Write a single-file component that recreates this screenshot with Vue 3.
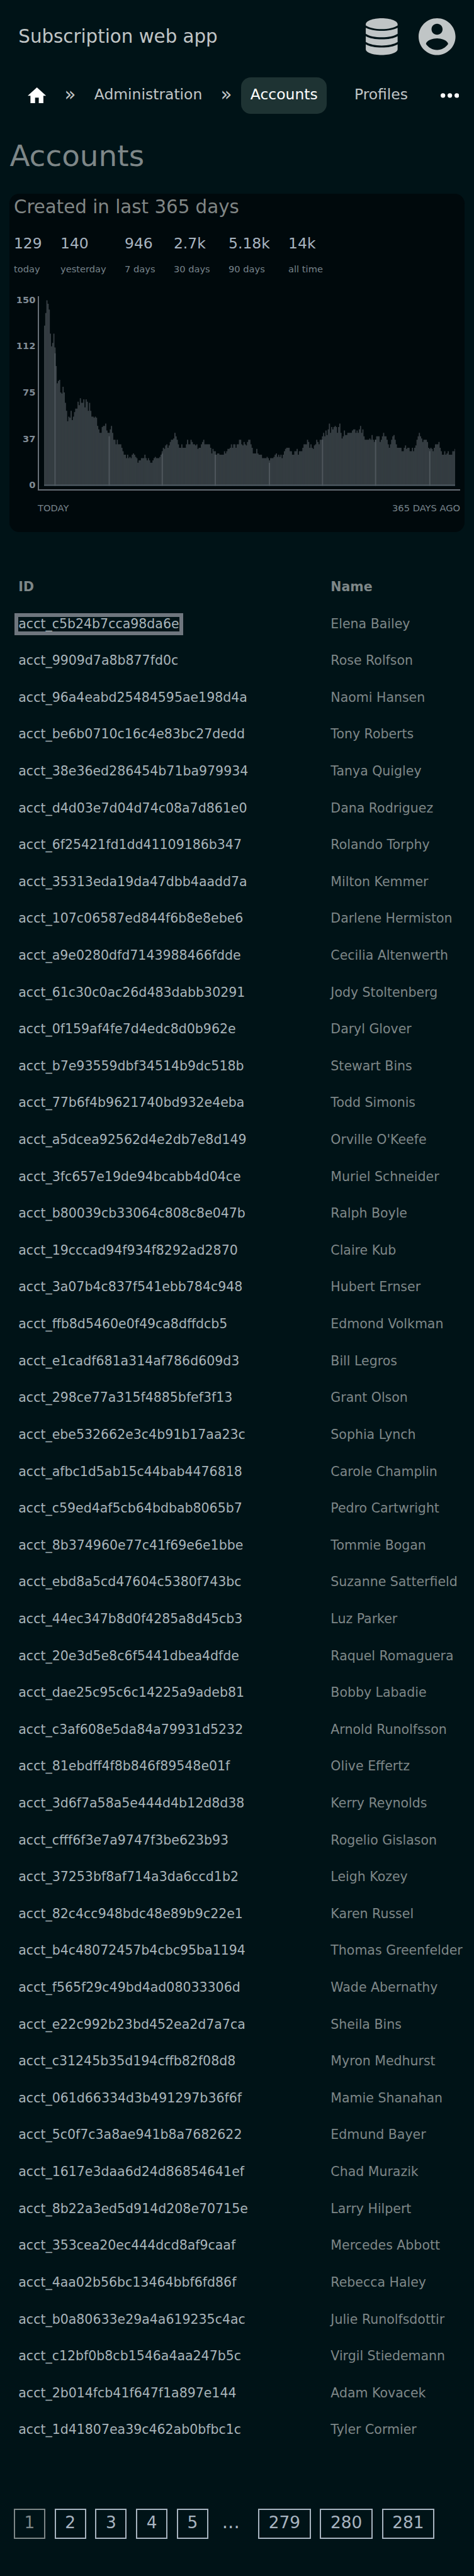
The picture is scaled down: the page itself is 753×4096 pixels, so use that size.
<script setup>
const stats = [
  ['129', 'today'],
  ['140', 'yesterday'],
  ['946', '7 days'],
  ['2.7k', '30 days'],
  ['5.18k', '90 days'],
  ['14k', 'all time'],
]

const ticks = ['150', '112', '75', '37', '0']

// Bar heights, newest day first.
const bars = [
  139, 150, 161, 158, 153, 132, 121, 124, 132, 120, 104, 89, 91, 92, 81, 80, 86, 81, 72, 65,
  56, 60, 59, 65, 57, 60, 64, 67, 67, 73, 70, 76, 72, 72, 75, 68, 75, 73, 65, 72,
  65, 60, 60, 59, 60, 59, 52, 49, 46, 46, 51, 52, 52, 54, 48, 46, 46, 49, 52, 46,
  40, 40, 36, 40, 36, 36, 36, 33, 30, 27, 27, 24, 27, 24, 25, 24, 27, 28, 27, 25,
  24, 20, 22, 22, 24, 24, 24, 27, 24, 22, 24, 22, 20, 20, 22, 24, 25, 24, 24, 24,
  25, 27, 30, 33, 32, 35, 36, 33, 35, 38, 40, 40, 41, 46, 43, 40, 36, 33, 33, 36,
  33, 33, 33, 36, 40, 36, 36, 40, 38, 36, 36, 35, 36, 32, 33, 33, 36, 38, 40, 36,
  36, 36, 36, 36, 33, 28, 32, 30, 30, 27, 28, 28, 27, 27, 27, 27, 30, 28, 30, 32,
  32, 33, 36, 33, 36, 36, 33, 36, 36, 40, 40, 36, 35, 38, 36, 35, 38, 40, 40, 36,
  33, 28, 28, 28, 32, 28, 27, 27, 27, 24, 24, 24, 24, 25, 24, 22, 24, 24, 24, 25,
  27, 28, 25, 27, 25, 27, 24, 27, 30, 32, 33, 33, 33, 30, 30, 27, 27, 30, 30, 32,
  27, 30, 30, 30, 33, 36, 36, 36, 40, 38, 33, 36, 33, 32, 35, 36, 40, 38, 36, 40,
  40, 43, 46, 43, 48, 44, 49, 54, 46, 51, 49, 51, 52, 51, 46, 51, 54, 46, 41, 43,
  48, 44, 44, 46, 46, 46, 46, 48, 49, 49, 46, 48, 46, 49, 52, 46, 49, 43, 40, 40,
  40, 40, 41, 40, 44, 40, 38, 40, 43, 43, 43, 38, 40, 43, 46, 43, 43, 40, 36, 33,
  36, 40, 43, 44, 40, 36, 33, 33, 33, 33, 30, 30, 33, 35, 32, 33, 33, 30, 30, 33,
  30, 33, 35, 40, 43, 46, 43, 41, 38, 40, 40, 40, 38, 33, 32, 33, 32, 30, 33, 36,
  36, 36, 38, 33, 30, 27, 27, 30, 27, 28, 30, 27, 27, 27, 30, 30, 32,
]

// One stepped outline keeps neighbouring bars free of gaps.
const area = 'M0 164' + bars.map((h, i) => `V${164 - h}H${i + 1}`).join('') + 'V164Z'
const seams = bars.slice(1).map((h, i) => `M${i + 1} 164V${164 - Math.min(h, bars[i])}`).join('')

// Highlighted days: [bar index, height].
const marks = [[9, 115], [56, 43], [102, 28], [148, 27], [195, 20], [241, 40], [287, 40], [334, 30]]

const rows = [
  ['c5b24b7cca98da6e', 'Elena Bailey'],
  ['9909d7a8b877fd0c', 'Rose Rolfson'],
  ['96a4eabd25484595ae198d4a', 'Naomi Hansen'],
  ['be6b0710c16c4e83bc27dedd', 'Tony Roberts'],
  ['38e36ed286454b71ba979934', 'Tanya Quigley'],
  ['d4d03e7d04d74c08a7d861e0', 'Dana Rodriguez'],
  ['6f25421fd1dd41109186b347', 'Rolando Torphy'],
  ['35313eda19da47dbb4aadd7a', 'Milton Kemmer'],
  ['107c06587ed844f6b8e8ebe6', 'Darlene Hermiston'],
  ['a9e0280dfd7143988466fdde', 'Cecilia Altenwerth'],
  ['61c30c0ac26d483dabb30291', 'Jody Stoltenberg'],
  ['0f159af4fe7d4edc8d0b962e', 'Daryl Glover'],
  ['b7e93559dbf34514b9dc518b', 'Stewart Bins'],
  ['77b6f4b9621740bd932e4eba', 'Todd Simonis'],
  ['a5dcea92562d4e2db7e8d149', "Orville O'Keefe"],
  ['3fc657e19de94bcabb4d04ce', 'Muriel Schneider'],
  ['b80039cb33064c808c8e047b', 'Ralph Boyle'],
  ['19cccad94f934f8292ad2870', 'Claire Kub'],
  ['3a07b4c837f541ebb784c948', 'Hubert Ernser'],
  ['ffb8d5460e0f49ca8dffdcb5', 'Edmond Volkman'],
  ['e1cadf681a314af786d609d3', 'Bill Legros'],
  ['298ce77a315f4885bfef3f13', 'Grant Olson'],
  ['ebe532662e3c4b91b17aa23c', 'Sophia Lynch'],
  ['afbc1d5ab15c44bab4476818', 'Carole Champlin'],
  ['c59ed4af5cb64bdbab8065b7', 'Pedro Cartwright'],
  ['8b374960e77c41f69e6e1bbe', 'Tommie Bogan'],
  ['ebd8a5cd47604c5380f743bc', 'Suzanne Satterfield'],
  ['44ec347b8d0f4285a8d45cb3', 'Luz Parker'],
  ['20e3d5e8c6f5441dbea4dfde', 'Raquel Romaguera'],
  ['dae25c95c6c14225a9adeb81', 'Bobby Labadie'],
  ['c3af608e5da84a79931d5232', 'Arnold Runolfsson'],
  ['81ebdff4f8b846f89548e01f', 'Olive Effertz'],
  ['3d6f7a58a5e444d4b12d8d38', 'Kerry Reynolds'],
  ['cfff6f3e7a9747f3be623b93', 'Rogelio Gislason'],
  ['37253bf8af714a3da6ccd1b2', 'Leigh Kozey'],
  ['82c4cc948bdc48e89b9c22e1', 'Karen Russel'],
  ['b4c48072457b4cbc95ba1194', 'Thomas Greenfelder'],
  ['f565f29c49bd4ad08033306d', 'Wade Abernathy'],
  ['e22c992b23bd452ea2d7a7ca', 'Sheila Bins'],
  ['c31245b35d194cffb82f08d8', 'Myron Medhurst'],
  ['061d66334d3b491297b36f6f', 'Mamie Shanahan'],
  ['5c0f7c3a8ae941b8a7682622', 'Edmund Bayer'],
  ['1617e3daa6d24d86854641ef', 'Chad Murazik'],
  ['8b22a3ed5d914d208e70715e', 'Larry Hilpert'],
  ['353cea20ec444dcd8af9caaf', 'Mercedes Abbott'],
  ['4aa02b56bc13464bbf6fd86f', 'Rebecca Haley'],
  ['b0a80633e29a4a619235c4ac', 'Julie Runolfsdottir'],
  ['c12bf0b8cb1546a4aa247b5c', 'Virgil Stiedemann'],
  ['2b014fcb41f647f1a897e144', 'Adam Kovacek'],
  ['1d41807ea39c462ab0bfbc1c', 'Tyler Cormier'],
]

const pages = ['1', '2', '3', '4', '5', '...', '279', '280', '281']
</script>

<template>
  <div class="page">
    <header class="top">
      <span class="brand">Subscription web app</span>
      <svg class="db" viewBox="0 0 290 336">
        <path d="M0 55C0 24 65 0 145 0s145 24 145 55v11C258 88 204 99 145 99S32 88 0 66z" />
        <path d="M0 88c34 18 86 27 145 27s111-9 145-27v54c-32 21-86 32-145 32S32 163 0 142z" />
        <path d="M0 163c34 20 86 29 145 29s111-9 145-29v54c-32 21-86 32-145 32S32 238 0 217z" />
        <path d="M0 238c34 20 86 29 145 29s111-9 145-29v45c0 30-65 53-145 53S0 313 0 283z" />
      </svg>
      <svg class="user" viewBox="2 2 20 20">
        <path d="M12 2C6.48 2 2 6.48 2 12s4.48 10 10 10 10-4.48 10-10S17.52 2 12 2zm0 3c1.66 0 3 1.34 3 3s-1.34 3-3 3-3-1.34-3-3 1.34-3 3-3zm0 14.2c-2.5 0-4.71-1.28-6-3.22.03-1.99 4-3.08 6-3.08 1.99 0 5.97 1.09 6 3.08-1.29 1.94-3.5 3.22-6 3.22z" />
      </svg>
    </header>

    <nav class="nav">
      <svg class="home" viewBox="2 3 20 17"><path d="M10 20v-6h4v6h5v-8h3L12 3 2 12h3v8z" /></svg>
      <span class="sep">»</span>
      <a>Administration</a>
      <span class="sep">»</span>
      <a class="active">Accounts</a>
      <a class="last">Profiles</a>
      <svg class="more" viewBox="0 0 16 4">
        <circle cx="2" cy="2" r="2" /><circle cx="8" cy="2" r="2" /><circle cx="14" cy="2" r="2" />
      </svg>
    </nav>

    <h1>Accounts</h1>

    <section class="card">
      <h2>Created in last 365 days</h2>
      <div class="stats">
        <div v-for="s in stats" :key="s[1]">
          <div class="num">{{ s[0] }}</div>
          <div class="lab">{{ s[1] }}</div>
        </div>
      </div>
      <div class="chart">
        <div class="ticks"><span v-for="t in ticks" :key="t">{{ t }}</span></div>
        <div class="plot">
          <svg viewBox="0 0 357 164" preserveAspectRatio="none">
            <path class="bar" :d="area" />
            <path class="seam" :d="seams" />
            <rect v-for="m in marks" :key="m[0]" class="mark" :x="m[0]" :y="164 - m[1]" width="1" :height="m[1]" />
            <rect class="base" x="0" y="163" width="357" height="1" />
          </svg>
        </div>
      </div>
      <div class="range"><span>TODAY</span><span>365 DAYS AGO</span></div>
    </section>

    <div class="table">
      <div class="row head"><span>ID</span><span>Name</span></div>
      <div v-for="(r, i) in rows" :key="r[0]" class="row">
        <span><a class="id" :class="{ focus: i === 0 }">acct_{{ r[0] }}</a></span>
        <span>{{ r[1] }}</span>
      </div>
    </div>

    <div class="pages">
      <span v-for="(p, i) in pages" :key="p" :class="p === '...' ? 'dots' : ['box', { current: i === 0 }]">{{ p }}</span>
    </div>
  </div>
</template>

<style>
html {
  font-size: 18.318px;
  background: #001317;
}
</style>

<style scoped>
.page {
  box-sizing: border-box;
  width: 753px;
  height: 4096px;
  overflow: hidden;
  background: #001317;
  color: #7e8788;
  font-family: "DejaVu Sans", sans-serif;
  white-space: nowrap;
}
svg {
  display: block;
  flex: none;
}
.top {
  display: flex;
  align-items: center;
  height: 6.4rem;
  padding: 0 1.6rem;
  color: #c0c5c6;
  fill: #c0c5c6;
}
.brand {
  flex: 1;
  font-size: 1.6rem;
  line-height: 2.4rem;
}
.db {
  width: 2.77rem;
  height: 3.2rem;
  margin-right: 1.82rem;
}
.user {
  width: 3.2rem;
  height: 3.2rem;
}
.nav {
  display: flex;
  align-items: center;
  height: 3.2rem;
  margin-top: 0.3rem;
  padding: 0 1.3rem 0 2.4rem;
  font-size: 1.28rem;
  color: #c0c5c6;
}
.nav a {
  box-sizing: border-box;
  height: 3.2rem;
  line-height: 2.98rem;
}
.home {
  width: 1.6rem;
  height: 1.37rem;
  fill: #fff;
}
.sep {
  margin: 0 1.6rem;
  font-size: 1.6rem;
  line-height: 3.04rem;
  height: 3.2rem;
}
.nav .active {
  margin-left: -0.8rem;
  padding: 0 0.8rem;
  border-radius: 0.85rem;
  background: #1e3333;
  color: #fff;
}
.nav .last {
  margin-left: 2.38rem;
}
.more {
  width: 1.6rem;
  height: 0.42rem;
  margin-left: auto;
  fill: #fff;
}
h1 {
  margin: 0.4rem 0 0.1rem 0.84rem;
  font-size: 2.56rem;
  font-weight: 400;
  line-height: 6.4rem;
}
.card {
  box-sizing: border-box;
  width: 39.51rem;
  height: 29.4rem;
  margin-left: 0.8rem;
  padding: 0 0.4rem;
  border-radius: 0.85rem;
  background: #00090c;
}
h2 {
  margin: 0;
  font-size: 1.6rem;
  font-weight: 400;
  line-height: 2.4rem;
  color: #808685;
}
.stats {
  display: flex;
  gap: 1.6rem;
  margin-top: 0.92rem;
}
.num {
  font-size: 1.28rem;
  line-height: 2rem;
  color: #a8b4c0;
}
.lab {
  margin-top: 0.74rem;
  font-size: 0.8rem;
  line-height: 1rem;
  color: #76838b;
}
.chart {
  display: flex;
  height: 16.9rem;
  margin-top: 1.84rem;
}
.ticks {
  display: flex;
  flex-direction: column;
  justify-content: space-between;
  align-items: flex-end;
  width: 1.88rem;
  margin: -0.16rem 0.2rem -0.02rem 0;
  font-size: 0.8rem;
  font-weight: 700;
  line-height: 1rem;
  color: #808c96;
}
.plot {
  display: flex;
  align-items: flex-end;
  box-sizing: border-box;
  width: 36.62rem;
  padding: 0 0 0.3rem 0.41rem;
  border-left: 2px solid #676f77;
  border-bottom: 2px solid #676f77;
}
.plot svg {
  width: 35.7rem;
  height: 16.4rem;
}
.bar {
  fill: #373f44;
}
.seam {
  fill: none;
  stroke: #2d353a;
  stroke-width: 0.25;
}
.mark {
  fill: #50585e;
}
.base {
  fill: #535f67;
}
.range {
  display: flex;
  justify-content: space-between;
  margin: 1.02rem 0 0 2.08rem;
  font-size: 0.8rem;
  line-height: 1rem;
  color: #76838b;
}
.table {
  margin-top: 3.18rem;
  padding-left: 1.6rem;
  font-size: 1.12rem;
}
.row {
  display: grid;
  grid-template-columns: 27.08rem 1fr;
  align-items: center;
  height: 3.2rem;
  line-height: 1.3rem;
}
.head {
  font-weight: 700;
}
.id {
  display: inline-block;
  color: #a8b4ba;
}
.focus {
  outline: 6px solid #6f767e;
}
.pages {
  display: flex;
  gap: 0.8rem;
  margin: 5.22rem 0 0 1.2rem;
  font-size: 1.44rem;
  line-height: 2.24rem;
  color: #a8b4c0;
}
.box {
  box-sizing: border-box;
  height: 2.6rem;
  padding: 0 0.8rem;
  border: 2px solid #a8b4c0;
}
.current {
  border-color: #7e8788;
  color: #7e8788;
}
.dots {
  margin: 0 0.8rem 0 0.4rem;
  font-size: 1.6rem;
  line-height: 2.36rem;
}
</style>
